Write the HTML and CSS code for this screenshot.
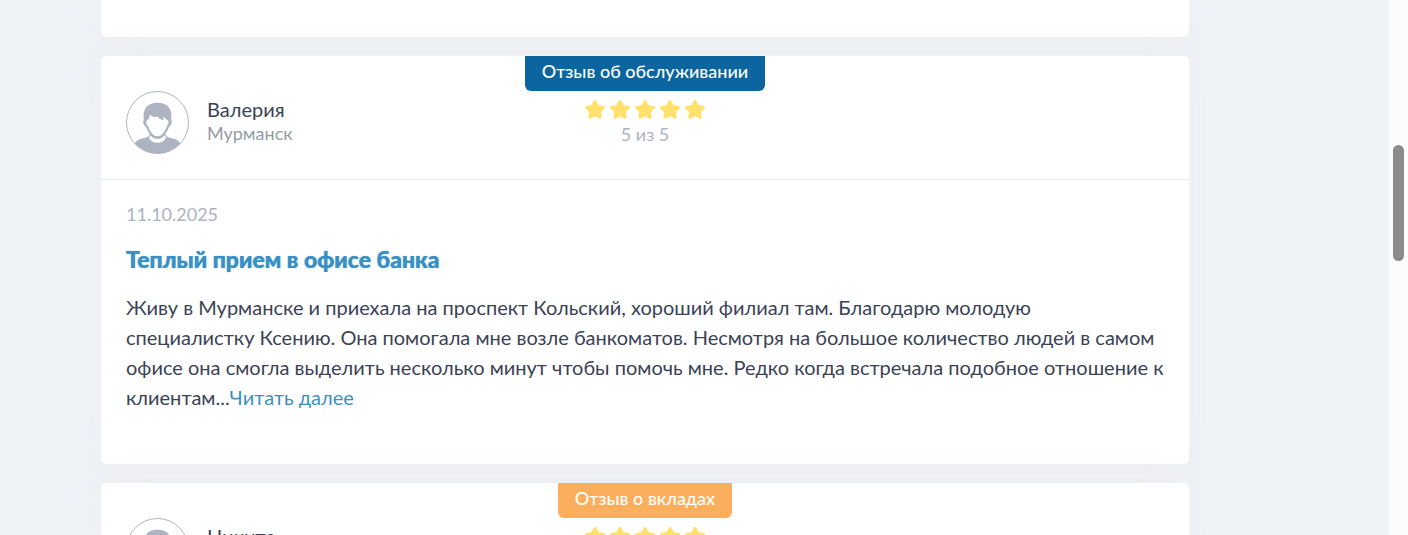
FILE: index.html
```html
<!DOCTYPE html>
<html lang="ru">
<head>
  <meta charset="UTF-8" />
  <title>Отзывы</title>
  <link rel="stylesheet" href="styles.css">
</head>
<body>
  <svg class="symbols" aria-hidden="true">
    <symbol id="avatar" viewBox="0 0 63 63">
      <clipPath id="avatar-clip"><circle cx="31.5" cy="31.5" r="31" /></clipPath>
      <circle cx="31.5" cy="31.5" r="31" fill="#fff" />
      <g clip-path="url(#avatar-clip)" fill="#adb3c0">
        <path d="M6 58C8 51 12 48 18 47C21 46.500 23.500 45.500 24 42H39C39.500 45.500 42 46.500 45 47C51 48 55 51 57 58V63H6Z" />
        <path fill="#fff" d="M23 46.500C25 53.500 38 53.500 40 46.500L38 44H25Z" />
        <path d="M17.800 29C16.500 18 21 11.800 31.500 11.800C42 11.800 46.500 18 45.200 29C46.500 31 45.500 34.500 43 36C41.500 40 39.500 42.500 38.500 44C36 49.300 27 49.300 24.500 44C23.500 42.500 21.500 40 20 36C17.500 34.500 16.500 31 17.800 29Z" />
        <path fill="#fff" d="M24 23.500C26 26 29.500 26.500 31.500 25.500C33 27.800 35 29 38 29L36.500 25.500C38.500 27 40.500 28 42 29.500C43.300 30.500 42.500 34 41 34.500C39.500 40 36 45.300 31.500 45.300C27 45.300 23.500 40 22 34.500C20 34 19.800 30 21 29.500C22.500 28.500 23.500 26.500 24 23.500Z" />
      </g>
      <circle cx="31.5" cy="31.5" r="31" fill="none" stroke="#adb3c0" />
    </symbol>
    <symbol id="star" viewBox="0 0 22 21">
      <path fill="#ffe16c" stroke="#ffe16c" stroke-width="3" stroke-linejoin="round" d="M11 2.500L13.500 7.500L19.500 8.500L15.300 12.500L16.200 18.200L11 15.600L5.800 18.200L6.700 12.500L2.500 8.500L8.500 7.500Z" />
    </symbol>
  </svg>

  <div class="page">
    <main class="reviews">
      <article class="review review-prev"></article>

      <article class="review">
        <header class="review-head">
          <div class="author">
            <svg class="avatar"><use href="#avatar" /></svg>
            <div>
              <div class="name">Валерия</div>
              <div class="city">Мурманск</div>
            </div>
          </div>
          <div class="rating">
            <div class="tag tag-service">Отзыв об обслуживании</div>
            <div class="stars">
              <svg><use href="#star" /></svg>
              <svg><use href="#star" /></svg>
              <svg><use href="#star" /></svg>
              <svg><use href="#star" /></svg>
              <svg><use href="#star" /></svg>
            </div>
            <div class="score">5 из 5</div>
          </div>
        </header>
        <div class="review-body">
          <div class="date">11.10.2025</div>
          <h2><a href="#">Теплый прием в офисе банка</a></h2>
          <p>Живу в Мурманске и приехала на проспект Кольский, хороший филиал там. Благодарю молодую специалистку Ксению. Она помогала мне возле банкоматов. Несмотря на большое количество людей в самом офисе она смогла выделить несколько минут чтобы помочь мне. Редко когда встречала подобное отношение к клиентам...<a class="more" href="#">Читать далее</a></p>
        </div>
      </article>

      <article class="review">
        <header class="review-head">
          <div class="author">
            <svg class="avatar"><use href="#avatar" /></svg>
            <div>
              <div class="name">Никита</div>
            </div>
          </div>
          <div class="rating">
            <div class="tag tag-deposit">Отзыв о вкладах</div>
            <div class="stars">
              <svg><use href="#star" /></svg>
              <svg><use href="#star" /></svg>
              <svg><use href="#star" /></svg>
              <svg><use href="#star" /></svg>
              <svg><use href="#star" /></svg>
            </div>
          </div>
        </header>
      </article>
    </main>
    <div class="scroll-track">
      <div class="scroll-thumb"></div>
    </div>
  </div>
</body>
</html>
```

FILE: styles.css
```css
* {
  box-sizing: border-box;
}
body {
  margin: 0;
  font-family: Lato, "Open Sans", sans-serif;
  font-size: 20px;
  line-height: 30px;
  color: #3b4256;
  background: #eff3f6;
}
a {
  color: #3a90c4;
  text-decoration: none;
}
.symbols {
  position: absolute;
  width: 0;
  height: 0;
}
.page {
  display: flex;
  height: 100vh;
  overflow: hidden;
}
.reviews {
  flex: 1;
  padding: 0 200px 0 101px;
}
.review {
  margin-bottom: 19px;
  background: #fff;
  border-radius: 6px;
  box-shadow: 0 0 40px rgba(236, 226, 232, 0.3);
}
.review-prev {
  padding-bottom: 37px;
  border-radius: 0 0 6px 6px;
}
.review-head {
  display: grid;
  grid-template-columns: 1fr auto 1fr;
  padding: 0 25px;
  border-bottom: 1px solid #e8eaed;
}
.author {
  display: flex;
  gap: 18px;
  padding: 35px 0 25px;
}
.avatar {
  width: 63px;
  height: 63px;
}
.name {
  padding-top: 6px;
  line-height: 24px;
}
.city {
  font-size: 18px;
  line-height: 24px;
  color: #959ca6;
}
.rating {
  display: flex;
  flex-direction: column;
  align-items: center;
}
.tag {
  padding: 0 17px 4px;
  font-size: 18px;
  font-weight: 500;
  line-height: 31px;
  color: #fff;
  border-radius: 0 0 6px 6px;
}
.tag-service {
  background: #0c659e;
}
.tag-deposit {
  background: #fbae5c;
}
.stars {
  display: flex;
  gap: 3px;
  margin-top: 8px;
}
.stars svg {
  width: 22px;
  height: 21px;
}
.score {
  font-size: 18px;
  line-height: 28px;
  color: #adb3c0;
}
.review-body {
  padding: 19px 25px 52px;
}
.date {
  font-size: 18px;
  color: #adb3c0;
}
h2 {
  margin: 15px 0 18px;
  font-size: 23px;
  font-weight: 900;
  line-height: 30px;
  text-shadow: 0 0 1px #3a90c4;
}
p {
  margin: 0;
}
.more {
  display: inline-block;
}
.scroll-track {
  width: 19px;
  padding: 145px 4px 0;
  background: #fcfcfc;
}
.scroll-thumb {
  height: 116px;
  border-radius: 6px;
  background: #8b8b8b;
}
```
